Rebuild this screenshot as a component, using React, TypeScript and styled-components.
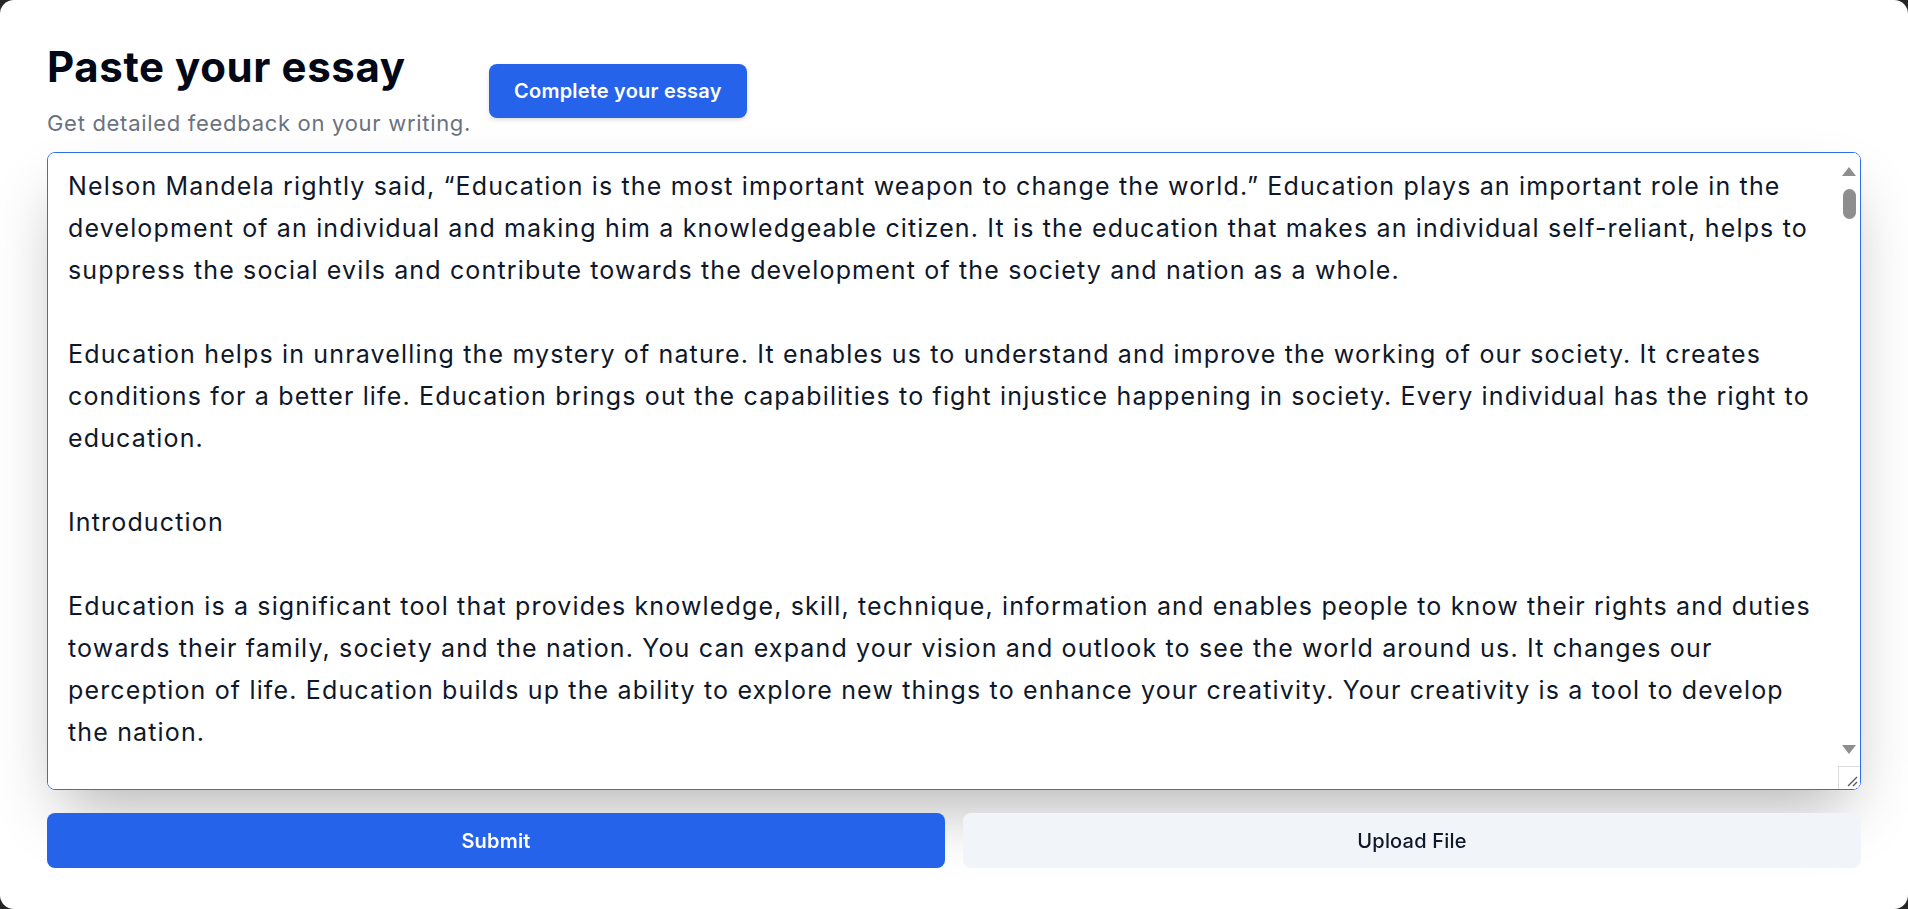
import React from "react";
import styled, { createGlobalStyle } from "styled-components";

const essay = `Nelson Mandela rightly said, “Education is the most important weapon to change the world.” Education plays an important role in the development of an individual and making him a knowledgeable citizen. It is the education that makes an individual self-reliant, helps to suppress the social evils and contribute towards the development of the society and nation as a whole.

Education helps in unravelling the mystery of nature. It enables us to understand and improve the working of our society. It creates conditions for a better life. Education brings out the capabilities to fight injustice happening in society. Every individual has the right to education.

Introduction

Education is a significant tool that provides knowledge, skill, technique, information and enables people to know their rights and duties towards their family, society and the nation. You can expand your vision and outlook to see the world around us. It changes our perception of life. Education builds up the ability to explore new things to enhance your creativity. Your creativity is a tool to develop the nation.
`;

const GlobalStyle = createGlobalStyle`
  html, body {
    margin: 0;
    padding: 0;
    background: #262626;
  }
  body {
    font-family: Inter, "Noto Sans", sans-serif;
    -webkit-font-smoothing: antialiased;
  }
  * {
    box-sizing: border-box;
  }
`;

const Window = styled.div`
  width: 100vw;
  height: 100vh;
  background: #ffffff;
  border-radius: 14px;
  overflow: hidden;
  padding: 42px 47px 40px;
  display: flex;
  flex-direction: column;
`;

const Header = styled.div`
  display: flex;
  align-items: flex-start;
  gap: 18px;
`;

const TitleBlock = styled.div`
  display: flex;
  flex-direction: column;
`;

const Title = styled.h1`
  margin: 0;
  font-size: 42px;
  line-height: 50px;
  font-weight: 700;
  letter-spacing: 0.6px;
  color: #020817;
`;

const Subtitle = styled.p`
  margin: 17px 0 0;
  font-size: 22px;
  line-height: 28px;
  letter-spacing: 0.7px;
  color: #6b7280;
`;

const CompleteButton = styled.button`
  margin-top: 22px;
  height: 54px;
  padding: 0 25px;
  border: none;
  border-radius: 8px;
  background: #2563eb;
  color: #ffffff;
  font-family: inherit;
  font-size: 20px;
  font-weight: 600;
  letter-spacing: 0.2px;
  box-shadow: 0 2px 4px rgba(0, 0, 0, 0.14);
  cursor: pointer;
`;

const Editor = styled.div`
  position: relative;
  z-index: 0;
  margin-top: 15px;
`;

const EssayBox = styled.textarea`
  display: block;
  height: 638px;
  width: 100%;
  padding: 12px 42px 12px 20px;
  border: 1px solid #2f6fed;
  border-radius: 8px;
  background: #ffffff;
  color: #0f172a;
  font-family: inherit;
  font-size: 25px;
  line-height: 42px;
  letter-spacing: 1.15px;
  box-shadow: 0 31px 62px -15px rgba(0, 0, 0, 0.3);
  outline: none;
  resize: both;
  caret-color: #000000;
  scrollbar-width: none;
`;

/* the textarea's scrollbar, drawn over its right edge */
const ScrollRail = styled.div`
  position: absolute;
  top: 1px;
  right: 1px;
  bottom: 1px;
  width: 22px;
  border-radius: 0 7px 7px 0;
  background: #ffffff;
  display: flex;
  flex-direction: column;
  align-items: center;
  pointer-events: none;
`;

const Arrow = styled.div<{ $down?: boolean }>`
  width: 0;
  height: 0;
  margin-top: ${({ $down }) => ($down ? "auto" : "14px")};
  border-left: 7px solid transparent;
  border-right: 7px solid transparent;
  ${({ $down }) =>
    $down ? "border-top: 9px solid #8e8e8e;" : "border-bottom: 9px solid #8e8e8e;"}
`;

const Thumb = styled.div`
  margin-top: 13px;
  width: 13px;
  height: 30px;
  border-radius: 7px;
  background: #8e8e8e;
`;

const Resizer = styled.div`
  margin-top: 12px;
  align-self: stretch;
  height: 23px;
  border-top: 1px solid #dcdcdc;
  border-left: 1px solid #dcdcdc;
  border-radius: 0 0 7px 0;
  display: flex;
  align-items: flex-end;
  justify-content: flex-end;
  padding: 0 2px 2px 0;
`;

const Actions = styled.div`
  position: relative;
  z-index: 1;
  margin-top: 23px;
  display: grid;
  grid-template-columns: 1fr 1fr;
  gap: 18px;
`;

const ActionButton = styled.button<{ $primary?: boolean }>`
  height: 55px;
  border: none;
  border-radius: 8px;
  background: ${({ $primary }) => ($primary ? "#2563eb" : "#f1f5f9")};
  color: ${({ $primary }) => ($primary ? "#ffffff" : "#0f172a")};
  font-family: inherit;
  font-size: 20px;
  font-weight: ${({ $primary }) => ($primary ? 600 : 500)};
  letter-spacing: 0.2px;
  cursor: pointer;
`;

export default function App() {
  return (
    <>
      <GlobalStyle />
      <Window>
        <Header>
          <TitleBlock>
            <Title>Paste your essay</Title>
            <Subtitle>Get detailed feedback on your writing.</Subtitle>
          </TitleBlock>
          <CompleteButton>Complete your essay</CompleteButton>
        </Header>
        <Editor>
          <EssayBox defaultValue={essay} spellCheck={false} autoFocus />
          <ScrollRail>
            <Arrow />
            <Thumb />
            <Arrow $down />
            <Resizer>
              <svg width="12" height="12" viewBox="0 0 12 12">
                <path d="M2 11 L11 2 M7 11 L11 7" stroke="#5a5a5a" strokeWidth="1.4" />
              </svg>
            </Resizer>
          </ScrollRail>
        </Editor>
        <Actions>
          <ActionButton $primary>Submit</ActionButton>
          <ActionButton>Upload File</ActionButton>
        </Actions>
      </Window>
    </>
  );
}
